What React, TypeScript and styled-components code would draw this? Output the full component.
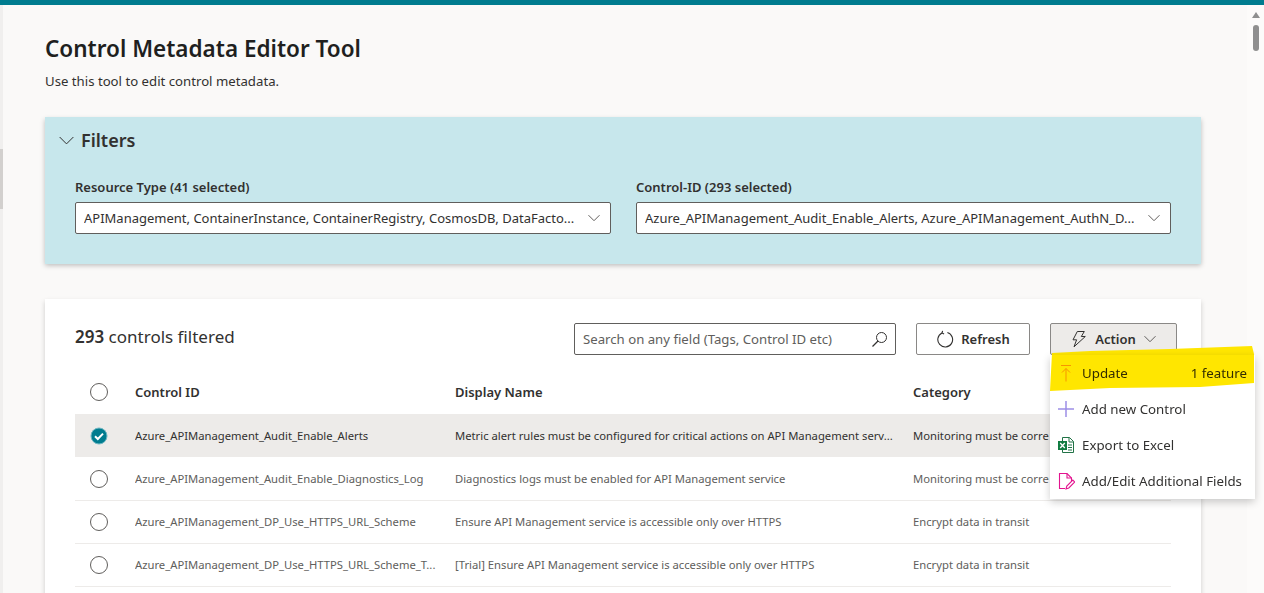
import { createGlobalStyle, styled } from "styled-components";
import { ReactNode } from "react";

const GlobalStyle = createGlobalStyle`
  html, body {
    margin: 0;
    height: 593px;
    overflow: hidden;
    background: #faf9f8;
    font-family: "Noto Sans", "Open Sans", sans-serif;
    color: #323130;
  }
  * { box-sizing: border-box; }
`;

const Shell = styled.div`
  display: flex;
  flex-direction: column;
  height: 593px;
  overflow: hidden;
`;
const TopBar = styled.div`
  height: 5px;
  flex: none;
  background: #007c8f;
`;
const Body = styled.div`
  display: flex;
  flex: 1;
  min-height: 0;
`;
const LeftRail = styled.div`
  width: 3px;
  flex: none;
  background: #f0efee;
  padding-top: 144px;
`;
const RailThumb = styled.div`
  height: 60px;
  background: #d2d0ce;
`;
const Main = styled.main`
  flex: 1;
  min-width: 0;
  padding: 28px 46px 0 42px;
`;
const Title = styled.h1`
  margin: 0;
  font-size: 22.5px;
  line-height: 32px;
  font-weight: 600;
  color: #201f1e;
`;
const Subtitle = styled.p`
  margin: 8px 0 0;
  font-size: 13.2px;
  line-height: 16px;
  color: #323130;
`;
const FilterPanel = styled.section`
  margin-top: 28px;
  height: 147px;
  background: #c7e7ec;
  box-shadow: 0 1.6px 5px rgba(0, 0, 0, 0.25);
  padding: 10px 30px 0 14px;
`;
const FilterHeading = styled.div`
  display: flex;
  align-items: center;
  gap: 7px;
  height: 26px;
  font-size: 18px;
  font-weight: 600;
`;
const FilterRow = styled.div`
  display: grid;
  grid-template-columns: 536px 535px;
  column-gap: 25px;
  margin: 25px 0 0 16px;
`;
const Label = styled.label`
  display: block;
  font-size: 13px;
  line-height: 18px;
  font-weight: 600;
  margin-bottom: 6px;
`;
const Dropdown = styled.div`
  display: flex;
  align-items: center;
  justify-content: space-between;
  height: 32px;
  padding: 0 10px 0 8px;
  background: #fff;
  border: 1px solid #605e5c;
  border-radius: 2px;
  font-size: 13px;
`;
const DropdownText = styled.span`
  white-space: nowrap;
  overflow: hidden;
`;
const Card = styled.section`
  position: relative;
  margin-top: 35px;
  height: 400px;
  padding: 24px 30px 0;
  background: #fff;
  box-shadow: 0 1.6px 5px rgba(0, 0, 0, 0.18);
`;
const Toolbar = styled.div`
  display: flex;
  align-items: center;
  height: 32px;
`;
const Count = styled.div`
  flex: 1;
  font-size: 17px;
  padding-bottom: 5px;
  color: #323130;
  b { font-weight: 600; }
`;
const SearchBox = styled.div`
  display: flex;
  align-items: center;
  justify-content: space-between;
  width: 322px;
  height: 32px;
  padding: 0 7px 0 8px;
  border: 1px solid #605e5c;
  border-radius: 2px;
  font-size: 13.2px;
  color: #605e5c;
  white-space: nowrap;
`;
const Button = styled.button<{ $active?: boolean; $width: number; $gap: number }>`
  display: flex;
  align-items: center;
  justify-content: center;
  gap: ${(p) => p.$gap}px;
  width: ${(p) => p.$width}px;
  height: 32px;
  margin-left: 20px;
  padding: 0;
  border: 1px solid #8a8886;
  border-radius: 2px;
  background: ${(p) => (p.$active ? "#edebe9" : "#fff")};
  font-family: inherit;
  font-size: 13px;
  font-weight: 600;
  color: #323130;
`;
const ActionSlot = styled.div`
  margin-right: -6px;
`;
const Row = styled.div<{ $selected?: boolean }>`
  display: grid;
  grid-template-columns: 60px 320px 458px 137px;
  align-items: center;
  height: 43px;
  background: ${(p) => (p.$selected ? "#edebe9" : "transparent")};
  box-shadow: ${(p) => (p.$selected ? "none" : "0 1px 0 #edebe9")};
  color: ${(p) => (p.$selected ? "#323130" : "#605e5c")};
  font-size: 11.25px;
`;
const HeadRow = styled(Row)`
  height: 42px;
  margin-top: 17px;
  padding-bottom: 2px;
  background: transparent;
  box-shadow: none;
  font-size: 13px;
  font-weight: 600;
  color: #323130;
`;
const Cell = styled.div`
  white-space: nowrap;
  overflow: hidden;
`;
const RadioCell = styled.div`
  display: flex;
  justify-content: center;
  margin-left: -12px;
  width: 72px;
`;
const Radio = styled.span`
  display: block;
  width: 18px;
  height: 18px;
  border: 1px solid #605e5c;
  border-radius: 50%;
`;
const ActionMenu = styled.div`
  position: absolute;
  left: 1005px;
  top: 56px;
  width: 205px;
  background: #fff;
  box-shadow: 0 3px 8px rgba(0, 0, 0, 0.2);
  z-index: 3;
`;
const MenuItem = styled.div`
  display: flex;
  align-items: center;
  height: 36px;
  padding: 0 8px 0 7px;
  font-size: 13.3px;
  color: #323130;
`;
const MenuIcon = styled.span`
  display: flex;
  justify-content: center;
  width: 18px;
  margin-right: 7px;
`;
const MenuLabel = styled.span`
  flex: 1;
  white-space: nowrap;
`;
const Highlight = styled.svg`
  position: absolute;
  left: 0;
  top: -9px;
  width: 205px;
  height: 46px;
  mix-blend-mode: multiply;
  pointer-events: none;
`;
const ScrollTrack = styled.div`
  width: 17px;
  flex: none;
  background: #fcfbfa;
  padding: 7px 4px 0;
`;
const ScrollArrow = styled.div`
  width: 0;
  height: 0;
  margin: 0 auto 7px;
  border-left: 4px solid transparent;
  border-right: 4px solid transparent;
  border-bottom: 6px solid #8f8f8f;
`;
const ScrollThumb = styled.div`
  width: 6px;
  height: 26px;
  margin: 0 auto;
  background: #8f8f8f;
  border-radius: 3px;
`;

const Chevron = ({ size = 12, color = "#605e5c" }: { size?: number; color?: string }) => (
  <svg width={size} height={size} viewBox="0 0 12 12" fill="none">
    <path d="M.5 3.2 6 8.7l5.5-5.5" stroke={color} strokeWidth={12 / size} />
  </svg>
);

const CheckedRadio = () => (
  <svg width="18" height="18" viewBox="0 0 18 18">
    <circle cx="9" cy="9" r="8" fill="#007c8f" stroke="#6fb7c2" strokeWidth="1" />
    <path d="M5 9.2 7.8 12 13 6.6" fill="none" stroke="#fff" strokeWidth="2" />
  </svg>
);

const SearchIcon = () => (
  <svg width="17" height="17" viewBox="0 0 17 17" fill="none" stroke="#323130">
    <circle cx="10.5" cy="6.5" r="5" />
    <path d="M7 10 1.5 15.5" strokeWidth="1.2" />
  </svg>
);

const RefreshIcon = () => (
  <svg width="18" height="18" viewBox="0 0 18 18" fill="none" stroke="#323130" strokeWidth="1.1">
    <path d="M6 2.9a7.4 7.4 0 1 0 5.4-.4" />
    <path d="M6.6 .9 6 3l2.1.9" />
  </svg>
);

const BoltIcon = () => (
  <svg width="16" height="18" viewBox="0 0 16 18" fill="none" stroke="#323130" strokeWidth="1" strokeLinejoin="round">
    <path d="M6.3 1.5h7l-3 5h4L3 16.8l2.6-7H2z" />
  </svg>
);

const UpdateIcon = () => (
  <svg width="12" height="17" viewBox="0 0 12 17" fill="none" stroke="#f7a500" strokeWidth="1">
    <path d="M1 .5h10M6 16.5V3.5M2 7.5l4-4 4 4" />
  </svg>
);

const PlusIcon = () => (
  <svg width="18" height="18" viewBox="0 0 18 18" stroke="#9d8ee6" strokeWidth="1.5">
    <path d="M9 1v16M1 9h16" />
  </svg>
);

const ExcelIcon = () => (
  <svg width="18" height="18" viewBox="0 0 18 18">
    <path d="M5.5 1.5h7l4 4v11h-11z" fill="#fff" stroke="#217346" />
    <path d="M12 1.5v4.5h4.5M11 9h4M11 11.5h4M11 14h4" fill="none" stroke="#217346" />
    <rect x="1" y="5" width="9" height="9" fill="#107c41" />
    <path d="m3.2 7 4.6 5M7.8 7l-4.6 5" stroke="#fff" strokeWidth="1.3" />
  </svg>
);

const EditDocIcon = () => (
  <svg width="18" height="18" viewBox="0 0 18 18" fill="none" stroke="#e3148f" strokeWidth="1.1">
    <path d="M8 16.5H2.5v-15h7.5l4.5 4.5v3" />
    <path d="M10 1.5V6h4.5" />
    <path d="m9 17 .8-3 6-6 2 2-6 6z" />
  </svg>
);

// category is cut where the open menu covers it
const rows = [
  ["Azure_APIManagement_Audit_Enable_Alerts", "Metric alert rules must be configured for critical actions on API Management serv...", "Monitoring must be corre"],
  ["Azure_APIManagement_Audit_Enable_Diagnostics_Log", "Diagnostics logs must be enabled for API Management service", "Monitoring must be corre"],
  ["Azure_APIManagement_DP_Use_HTTPS_URL_Scheme", "Ensure API Management service is accessible only over HTTPS", "Encrypt data in transit"],
  ["Azure_APIManagement_DP_Use_HTTPS_URL_Scheme_T...", "[Trial] Ensure API Management service is accessible only over HTTPS", "Encrypt data in transit"],
];

const menu: { icon: ReactNode; label: string; note?: string }[] = [
  { icon: <UpdateIcon />, label: "Update", note: "1 feature" },
  { icon: <PlusIcon />, label: "Add new Control" },
  { icon: <ExcelIcon />, label: "Export to Excel" },
  { icon: <EditDocIcon />, label: "Add/Edit Additional Fields" },
];

export default function App() {
  return (
    <Shell>
      <GlobalStyle />
      <TopBar />
      <Body>
        <LeftRail>
          <RailThumb />
        </LeftRail>
        <Main>
          <Title>Control Metadata Editor Tool</Title>
          <Subtitle>Use this tool to edit control metadata.</Subtitle>
          <FilterPanel>
            <FilterHeading>
              <Chevron size={15} color="#323130" />
              Filters
            </FilterHeading>
            <FilterRow>
              <div>
                <Label>Resource Type (41 selected)</Label>
                <Dropdown>
                  <DropdownText>APIManagement, ContainerInstance, ContainerRegistry, CosmosDB, DataFacto...</DropdownText>
                  <Chevron />
                </Dropdown>
              </div>
              <div>
                <Label>Control-ID (293 selected)</Label>
                <Dropdown>
                  <DropdownText>Azure_APIManagement_Audit_Enable_Alerts, Azure_APIManagement_AuthN_D...</DropdownText>
                  <Chevron />
                </Dropdown>
              </div>
            </FilterRow>
          </FilterPanel>
          <Card>
            <Toolbar>
              <Count>
                <b>293</b> controls filtered
              </Count>
              <SearchBox>
                Search on any field (Tags, Control ID etc)
                <SearchIcon />
              </SearchBox>
              <Button $width={114} $gap={7}>
                <RefreshIcon />
                Refresh
              </Button>
              <ActionSlot>
                <Button $active $width={127} $gap={8}>
                  <BoltIcon />
                  Action
                  <Chevron />
                </Button>
              </ActionSlot>
            </Toolbar>
            <ActionMenu>
              <Highlight viewBox="0 0 205 46" preserveAspectRatio="none">
                <path d="M2 7 40 5 120 3 202 0 204 8 204 37 150 41 60 42 0 45z" fill="#ffe600" />
              </Highlight>
              {menu.map((m) => (
                <MenuItem key={m.label}>
                  <MenuIcon>{m.icon}</MenuIcon>
                  <MenuLabel>{m.label}</MenuLabel>
                  {m.note && <span>{m.note}</span>}
                </MenuItem>
              ))}
            </ActionMenu>
            <HeadRow>
              <RadioCell>
                <Radio />
              </RadioCell>
              <Cell>Control ID</Cell>
              <Cell>Display Name</Cell>
              <Cell>Category</Cell>
            </HeadRow>
            {rows.map((r, i) => (
              <Row key={r[0]} $selected={i === 0}>
                <RadioCell>{i === 0 ? <CheckedRadio /> : <Radio />}</RadioCell>
                <Cell>{r[0]}</Cell>
                <Cell>{r[1]}</Cell>
                <Cell>{r[2]}</Cell>
              </Row>
            ))}
          </Card>
        </Main>
        <ScrollTrack>
          <ScrollArrow />
          <ScrollThumb />
        </ScrollTrack>
      </Body>
    </Shell>
  );
}
